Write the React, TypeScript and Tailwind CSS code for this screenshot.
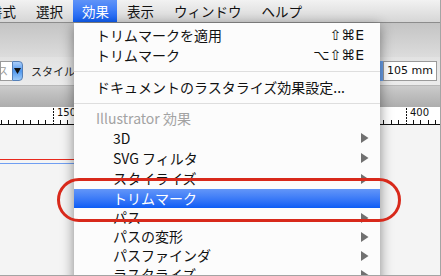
import React from "react";

const jp = "font-['Noto_Sans_CJK_JP','Noto_Sans',sans-serif]";

const menuBar = [
  { label: "書式", pad: "pl-0 pr-[10px] -ml-[11px]" },
  { label: "選択", pad: "px-[10px]" },
  { label: "効果", pad: "pl-[9px] pr-[8px]", active: true },
  { label: "表示", pad: "px-[10px]" },
  { label: "ウィンドウ", pad: "px-[10px]" },
  { label: "ヘルプ", pad: "px-[10px]" },
];

const subItems = [
  { label: "3D", h: "h-[20px]" },
  { label: "SVG フィルタ", h: "h-[20px]" },
  { label: "スタイライズ", h: "h-[21px]" },
  { label: "トリムマーク", h: "h-[19px]", active: true },
  { label: "パス", h: "h-[19px]" },
  { label: "パスの変形", h: "h-[19px]" },
  { label: "パスファインダ", h: "h-[19px]" },
  { label: "ラスタライズ", h: "h-[19px]" },
];

const Arrow = () => (
  <svg width="8" height="10" viewBox="0 0 8 10" className="absolute right-[11px] top-1/2 -translate-y-1/2">
    <polygon points="0,0 7.5,5 0,10" fill="#707070" />
  </svg>
);

const Ruler = () => {
  const ticks = [];
  for (let k = -7; k <= 52; k++) {
    const x = 53 + k * 7.354;
    if (k === 0 || k === 48) continue;
    ticks.push(<line key={k} x1={x} x2={x} y1={13} y2={17} stroke="#111" strokeWidth={1} />);
  }
  return (
    <svg width="441" height="18" viewBox="0 0 441 18" shapeRendering="crispEdges">
      <rect width="441" height="18" fill="#fff" />
      {ticks}
      <line x1={53.5} x2={53.5} y1={1} y2={17} stroke="#111" strokeDasharray="2 1" />
      <line x1={406.5} x2={406.5} y1={1} y2={17} stroke="#111" strokeDasharray="2 1" />
      <text x="57" y="9" fontSize="10" fontFamily="DejaVu Sans" fill="#111">150</text>
      <text x="410" y="9" fontSize="10" fontFamily="DejaVu Sans" fill="#111">400</text>
      <line x1={0} x2={441} y1={17.5} y2={17.5} stroke="#111" />
    </svg>
  );
};

export default function App() {
  return (
    <div className={`relative w-[441px] h-[276px] overflow-hidden bg-[#f3f3f3] border-r border-b border-[#a4a4a4] ${jp}`}>
      {/* background application window */}
      <div className="flex flex-col h-full">
        <div className="h-[23px] flex items-stretch bg-gradient-to-b from-[#f2f2f2] to-[#d6d6d6] border-b border-[#8c8c8c] text-[13.5px] text-[#111] shrink-0">
          {menuBar.map((m) => (
            <div
              key={m.label}
              className={`flex items-center ${m.pad} ${m.active ? "bg-gradient-to-b from-[#5f93f8] to-[#0d5ef4] text-white" : ""}`}
            >
              {m.label}
            </div>
          ))}
        </div>
        <div className="h-[34px] shrink-0 bg-gradient-to-b from-[#c4c4c4] to-[#dcdcdc]" />
        <div className="h-[29px] shrink-0 bg-gradient-to-b from-[#e2e2e2] to-[#ebebeb] flex items-center justify-between border-b border-[#b8b8b8]">
          <div className="flex items-center">
            <div className="w-[12px] h-[20px] bg-white border border-[#9a9a9a] border-r-0 text-[10px] text-[#999] overflow-hidden leading-[18px]">
              <span className="-ml-[3px]">ス</span>
            </div>
            <div className="w-[11px] h-[20px] rounded-r-[4px] bg-gradient-to-b from-[#a9cdf9] via-[#4f97ee] to-[#9ccaf8] border border-[#5580b8] flex items-center justify-center">
              <svg width="7" height="6" viewBox="0 0 7 6"><polygon points="0,0 7,0 3.5,6" fill="#111" /></svg>
            </div>
            <span className="ml-[8px] text-[11px] text-[#222]">スタイル：</span>
          </div>
          <div className="flex items-center mr-[3px]">
            <div className="w-[3px] h-[20px] bg-[#6aa2ef]" />
            <div className="w-[54px] h-[20px] bg-white border border-[#9a9a9a] text-[11px] font-['DejaVu_Sans',sans-serif] text-[#111] pl-[3px] leading-[18px]">
              105 mm
            </div>
          </div>
        </div>
        <div className="h-[21px] shrink-0 bg-gradient-to-b from-[#cbcbcb] to-[#adadad]" />
        <div className="h-[18px] shrink-0">
          <Ruler />
        </div>
        <div className="flex-1 bg-[#f4f4f4] pt-[34px]">
          <div className="h-px w-[300px] bg-[#e8291d]" />
          <div className="h-[3px]" />
          <div className="h-px w-[300px] bg-[#6f9ef2]" />
        </div>
      </div>

      {/* dropdown menu */}
      <div className="absolute left-[74px] top-[23px] w-[306px] h-[270px] bg-[#fcfcfc] shadow-[0_3px_12px_rgba(0,0,0,0.45)] text-[14px] text-[#111] pt-[3px]">
        <div className="relative h-[19px] flex items-center pl-[22px]">
          トリムマークを適用
          <span className="absolute right-[16px] font-['DejaVu_Sans',sans-serif] text-[14px]">⇧⌘E</span>
        </div>
        <div className="relative h-[20px] flex items-center pl-[22px]">
          トリムマーク
          <span className="absolute right-[16px] font-['DejaVu_Sans',sans-serif] text-[14px]">⌥⇧⌘E</span>
        </div>
        <div className="h-[13px] flex items-center">
          <div className="h-px w-full bg-[#dedede]" />
        </div>
        <div className="h-[19px] flex items-center pl-[22px]">ドキュメントのラスタライズ効果設定...</div>
        <div className="h-[12px] flex items-center">
          <div className="h-px w-full bg-[#dedede]" />
        </div>
        <div className="h-[19px] flex items-center pl-[22px] text-[#a3a3a3]">Illustrator 効果</div>
        {subItems.map((s) => (
          <div
            key={s.label}
            className={`relative ${s.h} flex items-center pl-[39px] ${s.active ? "bg-gradient-to-b from-[#6396f8] to-[#0a5cf5] text-white" : ""}`}
          >
            {s.label}
            {!s.active && <Arrow />}
          </div>
        ))}
      </div>

      {/* annotation */}
      <div className="absolute left-[57px] top-[178px] w-[344px] h-[44px] rounded-full border-[3px] border-[#d8291b]" />
    </div>
  );
}
